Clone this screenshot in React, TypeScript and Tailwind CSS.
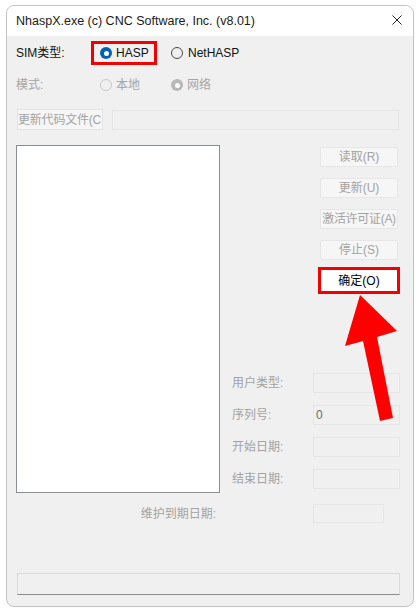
import React from 'react';

const font = { fontFamily: '"Liberation Sans", "Noto Sans CJK SC", sans-serif' };

function Radio({ checked, disabled }: { checked?: boolean; disabled?: boolean }) {
  if (checked) {
    return (
      <span
        className={`w-[12px] h-[12px] rounded-full flex items-center justify-center shrink-0 ${
          disabled ? 'bg-[#b8b8b8]' : 'bg-[#005fb8]'
        }`}
      >
        <span className="w-[5px] h-[5px] rounded-full bg-white" />
      </span>
    );
  }
  return (
    <span
      className={`w-[12px] h-[12px] rounded-full border shrink-0 ${
        disabled ? 'border-[#c8c8c8]' : 'border-[#4a4a4a]'
      }`}
    />
  );
}

function Btn({ label }: { label: string }) {
  return (
    <div className="w-[78px] h-[20px] flex items-center justify-center bg-[#f6f6f6] border border-[#e6e6e6] text-[#a3a3a3] rounded-[2px]">
      {label}
    </div>
  );
}

function Field({ w, value }: { w: string; value?: string }) {
  return (
    <div className={`${w} h-[20px] border border-[#e6e6e6] bg-[#f0f0f0] text-[#6b6b6b] pl-[2px] flex items-center`}>
      {value}
    </div>
  );
}

const infoRows = [
  { label: '用户类型:', value: '' },
  { label: '序列号:', value: '0' },
  { label: '开始日期:', value: '' },
  { label: '结束日期:', value: '' },
];

export default function App() {
  return (
    <div className="relative w-[420px] h-[613px] bg-white pt-[5px] pl-[6px] text-[12px] overflow-hidden" style={font}>
      <div className="w-[408px] h-[602px] rounded-[8px] border border-[#c2c2c2] overflow-hidden flex flex-col bg-[#f0f0f0]">
        {/* title bar */}
        <div className="h-[30px] bg-white flex items-center justify-between pl-[9px] pr-[11px] shrink-0">
          <span className="text-[12.5px] text-[#1a1a1a] pt-[1px]">NhaspX.exe (c) CNC Software, Inc. (v8.01)</span>
          <svg width="10" height="10" viewBox="0 0 10 10" className="mb-[3px]">
            <path d="M0.5 0.5 L9.5 9.5 M9.5 0.5 L0.5 9.5" stroke="#222" strokeWidth="1" />
          </svg>
        </div>

        {/* body */}
        <div className="flex-1 pl-[9px] pt-[5px] flex flex-col">
          {/* SIM type */}
          <div className="flex items-center h-[24px]">
            <span className="w-[75px] text-[#111]">SIM类型:</span>
            <div className="w-[66px] h-[24px] border-[3px] border-[#f20000] flex items-center pl-[6px] bg-[#f0f0f0]">
              <Radio checked />
              <span className="ml-[4px] text-[#111]">HASP</span>
            </div>
            <div className="ml-[14px] flex items-center">
              <Radio />
              <span className="ml-[5px] text-[#111]">NetHASP</span>
            </div>
          </div>

          {/* mode */}
          <div className="flex items-center h-[24px] mt-[8px] text-[#a6a6a6]">
            <span className="w-[84px]">模式:</span>
            <div className="w-[71px] flex items-center">
              <Radio disabled />
              <span className="ml-[4px]">本地</span>
            </div>
            <div className="flex items-center">
              <Radio checked disabled />
              <span className="ml-[4px]">网络</span>
            </div>
          </div>

          {/* update code file */}
          <div className="flex items-center mt-[12px] h-[21px]">
            <div className="ml-[1px] w-[86px] h-[21px] bg-[#f6f6f6] border border-[#e4e4e4] text-[#a3a3a3] whitespace-nowrap flex items-center tracking-[-0.2px]">
              更新代码文件(C
            </div>
            <div className="ml-[9px] w-[287px] h-[20px] border border-[#e6e6e6] bg-[#f0f0f0]" />
          </div>

          {/* main */}
          <div className="flex mt-[15px] w-[384px]">
            <div className="w-[204px] h-[348px] bg-white border border-[#8a8d93]" />
            <div className="flex-1 flex flex-col">
              <div className="flex flex-col items-end gap-[11px] pt-[2px] pr-[2px]">
                <Btn label="读取(R)" />
                <Btn label="更新(U)" />
                <div className="w-[78px] h-[20px] flex items-center justify-center bg-[#f6f6f6] border border-[#e6e6e6] text-[#a3a3a3] whitespace-nowrap tracking-[-0.3px]">
                  激活许可证(A)
                </div>
                <Btn label="停止(S)" />
              </div>
              <div className="flex justify-end mt-[7px]">
                <div className="w-[82px] h-[27px] border-[3px] border-[#f20000] bg-white flex items-center justify-center text-black">
                  确定(O)
                </div>
              </div>
              <div className="flex flex-col gap-[12px] mt-[79px] pl-[12px]">
                {infoRows.map((r) => (
                  <div key={r.label} className="flex items-center h-[20px]">
                    <span className="w-[81px] text-[#a3a3a3]">{r.label}</span>
                    <Field w="w-[87px]" value={r.value} />
                  </div>
                ))}
              </div>
            </div>
          </div>

          {/* maintenance date */}
          <div className="flex items-center mt-[11px] h-[19px]">
            <span className="w-[200px] text-right text-[#a3a3a3]">维护到期日期:</span>
            <div className="ml-[97px] w-[71px] h-[19px] border border-[#e6e6e6] bg-[#f0f0f0]" />
          </div>

          {/* status bar */}
          <div className="mt-[50px] ml-[1px] w-[383px] h-[22px] border border-[#dadada] border-b-[#8a8a8a] bg-[#f0f0f0]" />
        </div>
      </div>

      {/* red arrow overlay */}
      <svg className="absolute left-0 top-0 pointer-events-none" width="420" height="613" viewBox="0 0 420 613">
        <polygon
          points="360,295 397,331 377,337 393,418 380,421 363,341 345,346"
          fill="#ff0000"
        />
      </svg>
    </div>
  );
}
